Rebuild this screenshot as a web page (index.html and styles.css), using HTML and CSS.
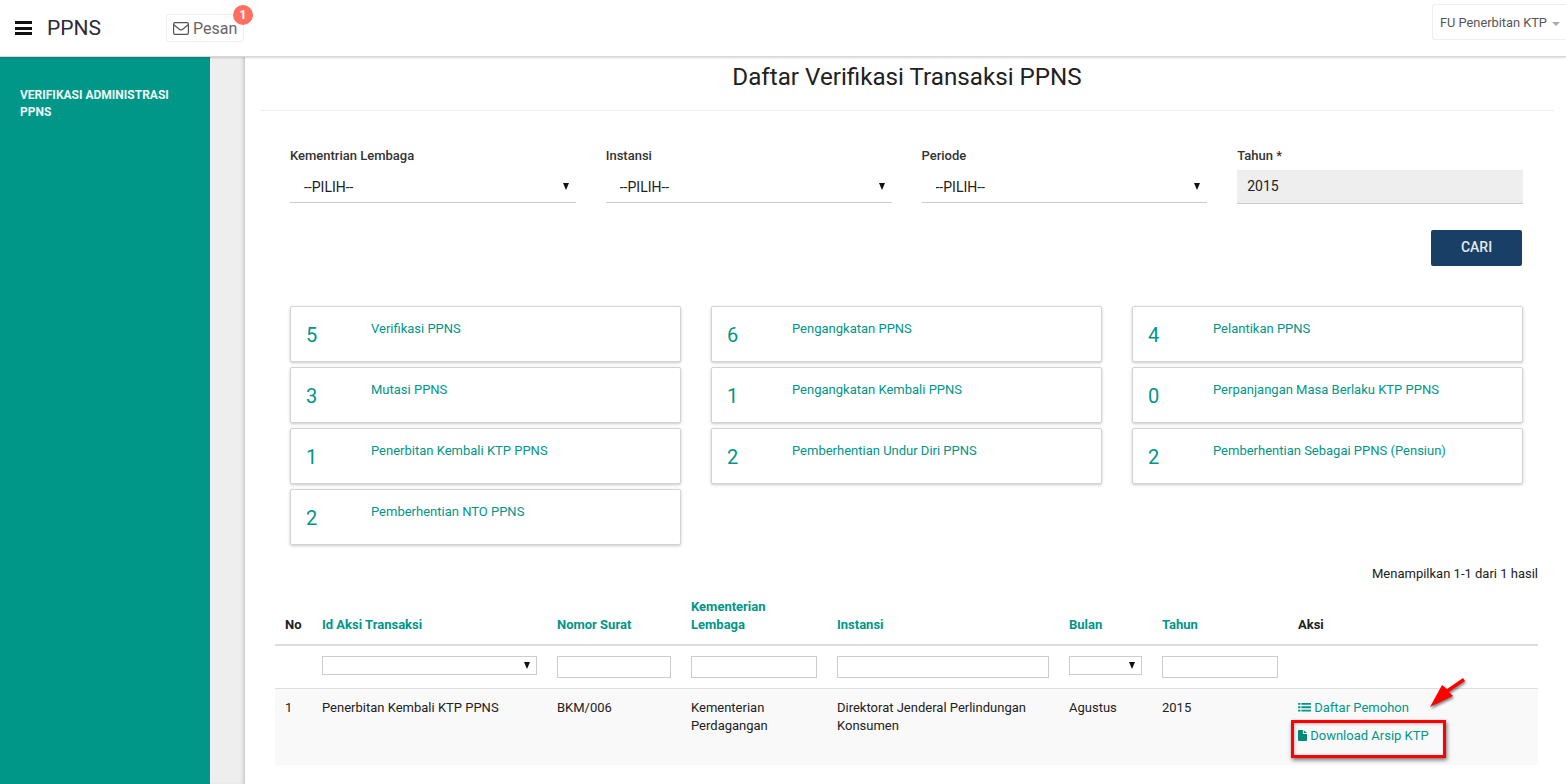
FILE: index.html
```html
<!DOCTYPE html>
<html lang="id">
<head>
  <meta charset="UTF-8" />
  <title>PPNS</title>
  <link rel="stylesheet" href="styles.css">
</head>
<body>
  <header class="topbar">
    <button class="burger" aria-label="Menu"><span></span><span></span><span></span></button>
    <div class="brand">PPNS</div>
    <a class="pesan">
      <svg class="icon-mail" viewBox="0 0 16 13" width="16" height="13"><rect x="0.6" y="0.6" width="14.8" height="11.8" rx="1.4" fill="none" stroke="#555" stroke-width="1.2"/><path d="M0.8 2.8 L6.6 7.4 Q8 8.4 9.4 7.4 L15.2 2.8" fill="none" stroke="#555" stroke-width="1.2"/></svg>
      Pesan
      <span class="badge">1</span>
    </a>
    <div class="role">FU Penerbitan KTP <span class="caret"></span></div>
  </header>

  <div class="layout">
    <aside class="sidebar">
      <a class="side-link">VERIFIKASI ADMINISTRASI PPNS</a>
    </aside>
    <div class="gutter"></div>

    <main class="content">
      <h1 class="title">Daftar Verifikasi Transaksi PPNS</h1>

      <form class="filters">
        <div class="field">
          <label>Kementrian Lembaga</label>
          <div class="select-wrap"><select><option>--PILIH--</option></select></div>
        </div>
        <div class="field">
          <label>Instansi</label>
          <div class="select-wrap"><select><option>--PILIH--</option></select></div>
        </div>
        <div class="field">
          <label>Periode</label>
          <div class="select-wrap"><select><option>--PILIH--</option></select></div>
        </div>
        <div class="field">
          <label>Tahun *</label>
          <input class="year" type="text" value="2015" disabled>
        </div>
      </form>

      <div class="actions"><button class="btn-cari" type="button">CARI</button></div>

      <div class="cards">
        <a class="card"><span class="num">5</span><span class="name">Verifikasi PPNS</span></a>
        <a class="card"><span class="num">6</span><span class="name">Pengangkatan PPNS</span></a>
        <a class="card"><span class="num">4</span><span class="name">Pelantikan PPNS</span></a>
        <a class="card"><span class="num">3</span><span class="name">Mutasi PPNS</span></a>
        <a class="card"><span class="num">1</span><span class="name">Pengangkatan Kembali PPNS</span></a>
        <a class="card"><span class="num">0</span><span class="name">Perpanjangan Masa Berlaku KTP PPNS</span></a>
        <a class="card"><span class="num">1</span><span class="name">Penerbitan Kembali KTP PPNS</span></a>
        <a class="card"><span class="num">2</span><span class="name">Pemberhentian Undur Diri PPNS</span></a>
        <a class="card"><span class="num">2</span><span class="name">Pemberhentian Sebagai PPNS (Pensiun)</span></a>
        <a class="card"><span class="num">2</span><span class="name">Pemberhentian NTO PPNS</span></a>
      </div>

      <div class="summary">Menampilkan 1-1 dari 1 hasil</div>

      <table class="grid">
        <colgroup>
          <col class="c-no"><col class="c-id"><col class="c-nomor"><col class="c-kem"><col class="c-inst"><col class="c-bulan"><col class="c-tahun"><col class="c-aksi">
        </colgroup>
        <thead>
          <tr class="heads">
            <th>No</th>
            <th><a>Id Aksi Transaksi</a></th>
            <th><a>Nomor Surat</a></th>
            <th><a>Kementerian Lembaga</a></th>
            <th><a>Instansi</a></th>
            <th><a>Bulan</a></th>
            <th><a>Tahun</a></th>
            <th>Aksi</th>
          </tr>
          <tr class="row-filter">
            <td></td>
            <td><div class="mini-select short"><select></select></div></td>
            <td><input type="text"></td>
            <td><input type="text"></td>
            <td><input type="text"></td>
            <td><div class="mini-select short"><select></select></div></td>
            <td><input type="text"></td>
            <td></td>
          </tr>
        </thead>
        <tbody>
          <tr class="row-data">
            <td>1</td>
            <td>Penerbitan Kembali KTP PPNS</td>
            <td>BKM/006</td>
            <td>Kementerian Perdagangan</td>
            <td>Direktorat Jenderal Perlindungan Konsumen</td>
            <td>Agustus</td>
            <td>2015</td>
            <td>
              <a class="act">
                <svg viewBox="0 0 14 12" width="13" height="11"><path d="M0 1h2.6v2H0zM3.6 1H14v2H3.6zM0 4.7h2.6v2H0zM3.6 4.7H14v2H3.6zM0 8.4h2.6v2H0zM3.6 8.4H14v2H3.6z" fill="#009688"/></svg>
                Daftar Pemohon
              </a>
              <a class="act act-file">
                <svg viewBox="0 0 10 12" width="9" height="11"><path d="M0 1a1 1 0 0 1 1-1h4.4v3.6a.6.6 0 0 0 .6.6h4V11a1 1 0 0 1-1 1H1a1 1 0 0 1-1-1zM6.4 0.2L10 3.2H6.4z" fill="#00897b"/></svg>
                Download Arsip KTP
              </a>
            </td>
          </tr>
        </tbody>
      </table>
    </main>
  </div>

  <!-- annotation drawn over the screenshot -->
  <div class="note-box"></div>
  <svg class="note-arrow" viewBox="0 0 40 36" width="40" height="36">
    <path d="M35 1 L37 4 L21 15 L25 19 L2 30 L14 8 L19 12 Z" fill="#f00"/>
  </svg>
</body>
</html>
```

FILE: styles.css
```css
* {
  box-sizing: border-box;
}
html, body {
  margin: 0;
  padding: 0;
}
body {
  font-family: Roboto, "Liberation Sans", sans-serif;
  font-size: 13px;
  color: #212121;
  background: #fff;
  position: relative;
  overflow-x: hidden;
}
a {
  color: #009688;
  text-decoration: none;
}

/* top bar */
.topbar {
  height: 57px;
  display: flex;
  align-items: center;
  background: #fff;
  border-bottom: 1px solid #d8d8d8;
  box-shadow: 0 1px 2px rgba(0,0,0,0.15);
  position: relative;
  z-index: 2;
}
.burger {
  width: 17px;
  height: 14px;
  margin-left: 15px;
  padding: 0;
  border: none;
  background: none;
  display: flex;
  flex-direction: column;
  justify-content: space-between;
}
.burger span {
  display: block;
  height: 3px;
  background: #111;
}
.brand {
  margin-left: 15px;
  font-size: 21px;
  color: #2b2b3a;
  width: 119px;
}
.pesan {
  position: relative;
  display: flex;
  align-items: center;
  gap: 4px;
  width: 78px;
  height: 28px;
  padding-left: 6px;
  border: 1px solid #eee;
  border-radius: 3px;
  color: #666;
  font-size: 16px;
}
.badge {
  position: absolute;
  top: -10px;
  right: -10px;
  width: 20px;
  height: 20px;
  border-radius: 50%;
  background: #ff6f61;
  color: #fff;
  font-size: 12px;
  font-weight: 700;
  line-height: 20px;
  text-align: center;
}
.role {
  margin-left: auto;
  align-self: flex-start;
  margin-top: 4px;
  width: 134px;
  height: 36px;
  padding-left: 7px;
  border: 1px solid #eee;
  border-right: none;
  border-radius: 3px 0 0 3px;
  line-height: 36px;
  font-size: 12.8px;
  color: #555;
  white-space: nowrap;
}
.caret {
  display: inline-block;
  margin-left: 2px;
  vertical-align: middle;
  border-left: 4px solid transparent;
  border-right: 4px solid transparent;
  border-top: 4px solid #aaa;
}

/* page frame */
.layout {
  display: flex;
  min-height: 727px;
}
.sidebar {
  width: 210px;
  flex: none;
  background: #009688;
  padding: 30px 20px;
}
.side-link {
  display: block;
  color: #eef7f6;
  font-size: 12px;
  font-weight: 700;
  line-height: 17px;
}
.gutter {
  width: 35px;
  flex: none;
  background: #eee;
  box-shadow: inset -3px 0 3px -1px rgba(0,0,0,0.14);
}
.content {
  flex: 1;
  min-width: 0;
  padding: 0 28px 18px 30px;
}
.title {
  margin: 0 -16px 0 -15px;
  height: 54px;
  padding-top: 5px;
  border-bottom: 1px solid #eee;
  font-size: 24.2px;
  font-weight: 400;
  line-height: 30px;
  color: #212121;
  text-align: center;
}

/* filter form */
.filters {
  display: grid;
  grid-template-columns: repeat(4, 1fr);
  column-gap: 30px;
  margin: 37px 15px 0 15px;
}
.field label {
  display: block;
  height: 22px;
  font-size: 13px;
  font-weight: 500;
  line-height: 16px;
  color: #333;
}
.select-wrap, .mini-select {
  position: relative;
}
.select-wrap::after, .mini-select::after {
  content: "";
  position: absolute;
  top: 13px;
  right: 7px;
  border-left: 3.5px solid transparent;
  border-right: 3.5px solid transparent;
  border-top: 7px solid #111;
  pointer-events: none;
}
.select-wrap select {
  display: block;
  width: 100%;
  height: 33px;
  padding: 2px 14px 0;
  border: none;
  border-bottom: 1px solid #ccc;
  border-radius: 0;
  background: #fff;
  appearance: none;
  font-family: inherit;
  font-size: 14px;
  color: #212121;
}
.year {
  display: block;
  width: 100%;
  height: 34px;
  padding: 0 10px 2px;
  border: none;
  border-bottom: 1px solid #ccc;
  background: #eee;
  font-family: inherit;
  font-size: 14px;
  color: #212121;
  opacity: 1;
}
.actions {
  display: flex;
  justify-content: flex-end;
  margin: 26px 16px 0 0;
}
.btn-cari {
  width: 91px;
  height: 36px;
  padding: 0 0 2px;
  border: none;
  border-radius: 2px;
  background: #1a3f66;
  color: #e4e9ee;
  font-family: inherit;
  font-size: 14px;
  font-weight: 500;
}

/* count cards */
.cards {
  display: grid;
  grid-template-columns: repeat(3, 391px);
  grid-auto-rows: 56px;
  column-gap: 30px;
  row-gap: 5px;
  margin: 40px 0 0 15px;
}
.card {
  display: flex;
  background: #fff;
  border: 1px solid #d4d4d4;
  border-radius: 2px;
  box-shadow: 0 1px 3px rgba(0,0,0,0.22);
  color: #009688;
}
.num {
  width: 80px;
  padding: 15px 0 0 15px;
  font-size: 20px;
  line-height: 26px;
}
.name {
  padding-top: 14px;
  font-size: 13px;
  line-height: 15px;
}
.summary {
  margin-top: 20px;
  height: 18px;
  text-align: right;
  font-size: 13px;
  line-height: 18px;
  color: #212121;
}

/* table */
.grid {
  width: 1263px;
  table-layout: fixed;
  border-collapse: collapse;
  font-size: 13px;
  margin-top: 8px;
}
.c-no { width: 37px; }
.c-id { width: 235px; }
.c-nomor { width: 134px; }
.c-kem { width: 146px; }
.c-inst { width: 232px; }
.c-bulan { width: 93px; }
.c-tahun { width: 136px; }
.c-aksi { width: 250px; }
.heads th {
  padding: 0 10px 10px;
  height: 54px;
  border-bottom: 2px solid #ddd;
  text-align: left;
  vertical-align: bottom;
  font-weight: 700;
  line-height: 18px;
  color: #212121;
}
.row-filter td {
  height: 43px;
  padding: 0 10px;
  vertical-align: top;
  padding-top: 10px;
  border-bottom: 1px solid #ddd;
}
.row-filter input {
  display: block;
  width: 100%;
  height: 22px;
  border: 1px solid #ccc;
  background: #fff;
}
.mini-select select {
  display: block;
  width: 100%;
  height: 19px;
  border: 1px solid #ccc;
  border-radius: 0;
  background: #fff;
  appearance: none;
}
.mini-select::after {
  top: 6px;
}
.row-data td {
  height: 77px;
  padding: 10px 10px 0;
  vertical-align: top;
  background: #f9f9f9;
  line-height: 18px;
  color: #212121;
}
.act {
  display: block;
  white-space: nowrap;
}
.act svg {
  vertical-align: -1px;
}
.act-file {
  margin-top: 10px;
}

/* red annotation */
.note-box {
  position: absolute;
  left: 1291px;
  top: 720px;
  width: 155px;
  height: 38px;
  border: 3px solid #f00;
  box-shadow: 1px 2px 4px rgba(0,0,0,0.55), inset 1px 1px 3px rgba(0,0,0,0.25);
}
.note-arrow {
  position: absolute;
  left: 1428px;
  top: 677px;
  filter: drop-shadow(1px 2px 1px rgba(0,0,0,0.45));
}
```
